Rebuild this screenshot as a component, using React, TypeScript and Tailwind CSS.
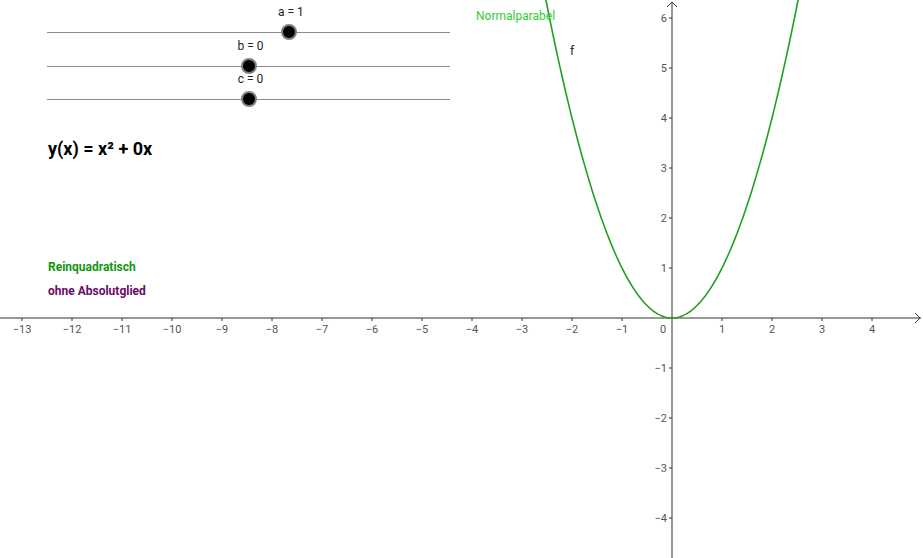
import React from "react";

const OX = 672;
const OY = 318;
const U = 50;
const SLIDER_W = 403;

const xTicks = [-13, -12, -11, -10, -9, -8, -7, -6, -5, -4, -3, -2, -1, 1, 2, 3, 4];
const yTicks = [6, 5, 4, 3, 2, 1, -1, -2, -3, -4];

const sliders = [
  { name: "a", value: 1 },
  { name: "b", value: 0 },
  { name: "c", value: 0 },
];

function fmt(n: number) {
  return n < 0 ? "\u2212" + Math.abs(n) : String(n);
}

function parabola() {
  const pts: string[] = [];
  for (let i = 0; i <= 260; i++) {
    const x = -2.6 + (5.2 * i) / 260;
    pts.push(`${(OX + x * U).toFixed(2)},${(OY - x * x * U).toFixed(2)}`);
  }
  return "M" + pts.join(" L");
}

function Slider({ name, value }: { name: string; value: number }) {
  // slider range -5 .. 5
  const pos = ((value + 5) / 10) * SLIDER_W;
  return (
    <div className="relative flex flex-col gap-[14px] pt-[6px]">
      <div className="relative h-[12px]">
        <span
          className="absolute top-0 -translate-x-1/2 whitespace-nowrap text-[12px] leading-none text-[#222]"
          style={{ left: pos + 2 }}
        >
          {name} = {value}
        </span>
      </div>
      <div className="relative h-px w-full bg-[#8c8c8c]">
        <div
          className="absolute top-0 h-[16px] w-[16px] -translate-x-1/2 -translate-y-1/2 rounded-full border-[2px] border-[#808080] bg-black"
          style={{ left: pos }}
        />
      </div>
    </div>
  );
}

export default function App() {
  return (
    <div className="relative h-[558px] w-[923px] overflow-hidden bg-white font-['Roboto',sans-serif]">
      <svg className="absolute inset-0" width={923} height={558} viewBox="0 0 923 558">
        {/* axes */}
        <line x1={0} y1={OY} x2={921} y2={OY} stroke="#333" strokeWidth={1} />
        <polyline points="915,313 920,318 915,323" fill="none" stroke="#333" strokeWidth={1} />
        <line x1={OX} y1={2} x2={OX} y2={558} stroke="#333" strokeWidth={1} />
        <polyline points="667,7 672,2 677,7" fill="none" stroke="#333" strokeWidth={1} />

        {xTicks.map((t) => (
          <g key={"x" + t}>
            <line x1={OX + t * U} y1={OY} x2={OX + t * U} y2={OY + 3} stroke="#333" />
            <text
              x={OX + t * U}
              y={OY + 15}
              textAnchor="middle"
              fontSize={11}
              fill="#555"
              fontFamily="Roboto, sans-serif"
            >
              {fmt(t)}
            </text>
          </g>
        ))}
        <text x={663} y={OY + 15} textAnchor="middle" fontSize={11} fill="#555" fontFamily="Roboto, sans-serif">
          0
        </text>

        {yTicks.map((t) => (
          <g key={"y" + t}>
            <line x1={OX - 3} y1={OY - t * U} x2={OX} y2={OY - t * U} stroke="#333" />
            <text
              x={OX - 5}
              y={OY - t * U + 4}
              textAnchor="end"
              fontSize={11}
              fill="#555"
              fontFamily="Roboto, sans-serif"
            >
              {fmt(t)}
            </text>
          </g>
        ))}

        <path d={parabola()} fill="none" stroke="#22a022" strokeWidth={1.6} />
      </svg>

      {/* left panel: sliders, formula, hints */}
      <div className="absolute left-[47px] top-0 flex w-[403px] flex-col">
        <div className="flex flex-col gap-[0.5px]">
          {sliders.map((s) => (
            <Slider key={s.name} name={s.name} value={s.value} />
          ))}
        </div>
        <div className="mt-[40px] pl-px text-[18px] font-bold leading-none text-black">y(x) = x² + 0x</div>
        <div className="mt-[103px] flex flex-col gap-[12px] pl-px text-[12px] font-bold leading-none">
          <span className="text-[#129612]">Reinquadratisch</span>
          <span className="text-[#6a0a6a]">ohne Absolutglied</span>
        </div>
      </div>

      {/* curve labels */}
      <div className="absolute left-[476px] top-[10px] text-[12px] leading-none text-[#33cc33]">Normalparabel</div>
      <div className="absolute left-[570px] top-[45px] text-[12px] leading-none text-[#222]">f</div>
    </div>
  );
}
